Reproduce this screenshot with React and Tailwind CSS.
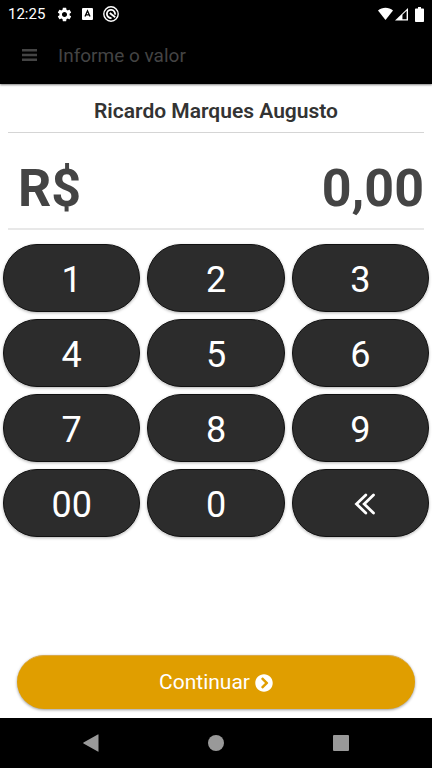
import React, { useState } from 'react';
import { FaChevronCircleRight } from 'react-icons/fa';
import { MdSettings } from 'react-icons/md';

const KEYS = ['1', '2', '3', '4', '5', '6', '7', '8', '9', '00', '0'];

function StatusBar() {
  return (
    <div className="flex h-7 items-center justify-between bg-black px-2 text-white">
      <div className="flex items-center">
        <span className="w-12 text-[15px] leading-7">12:25</span>
        <MdSettings size={17} />
        <svg className="ml-[9px]" width="11" height="12" viewBox="0 0 11 12">
          <rect width="11" height="12" rx="1" fill="#fff" />
          <path d="M3 8.6 5.5 2.8 8 8.6M3.9 6.8h3.2" fill="none" stroke="#000" strokeWidth="1.3" />
        </svg>
        <svg className="ml-[10px]" width="16" height="16" viewBox="0 0 16 16" fill="none" stroke="#fff">
          <circle cx="8" cy="8" r="7.2" strokeWidth="1.4" />
          <path d="M8.500 12A4.100 4.100 0 1 1 12 8.700" strokeWidth="1.8" />
          <path d="m6.800 7 5.400 4.300" strokeWidth="1.8" />
        </svg>
      </div>
      <div className="flex items-center">
        <svg width="15" height="14" viewBox="0 0 16 14">
          <path d="M0 3.2C4.5-.6 11.5-.6 16 3.2L8 13.5z" fill="#fff" />
        </svg>
        <svg className="ml-[2px]" width="13" height="14" viewBox="0 0 14 14">
          <path d="M0 14 14 .5V14z" fill="#fff" />
          <path d="M8 7.8 12.5 3.500V12.700H8z" fill="#000" />
        </svg>
        <svg className="ml-[7px]" width="9" height="15" viewBox="0 0 9 15">
          <path d="M3 0h3v1.500h2.200q.8 0 .8.800v11.900q0 .8-.8.800H.8q-.8 0-.8-.800V2.300q0-.8.800-.8H3z" fill="#fff" />
        </svg>
      </div>
    </div>
  );
}

function NavBar() {
  return (
    <nav className="flex h-[50px] items-center justify-around bg-black px-[28px] text-[#999]">
      <button aria-label="Voltar">
        <svg width="16" height="18" viewBox="0 0 16 18" fill="currentColor">
          <path d="M15.500.8v16.400q0 .8-.7.400L.5 9.500Q-.1 9 .5 8.500L14.800.4q.7-.4.700.4z" />
        </svg>
      </button>
      <button aria-label="Início" className="size-4 rounded-full bg-[#999]" />
      <button aria-label="Recentes" className="size-4 rounded-[1px] bg-[#999]" />
    </nav>
  );
}

export default function App() {
  const [cents, setCents] = useState('');

  const value = (Number(cents) / 100).toFixed(2).replace('.', ',');

  return (
    <div className="flex min-h-screen flex-col bg-white font-[Roboto,sans-serif]">
      <StatusBar />
      <header className="flex h-14 items-center bg-black pl-[22px] text-[#444] shadow-[0_1px_2px_rgba(0,0,0,0.5)]">
        <button aria-label="Menu" className="mr-[21px]">
          <svg width="15" height="14" viewBox="0 0 15 14" fill="currentColor">
            <path d="M0 0h15v2.500H0zM0 4.700h15v2.500H0zM0 9.500h15V12H0z" />
          </svg>
        </button>
        <h1 className="text-[19px]">Informe o valor</h1>
      </header>

      <main className="flex flex-1 flex-col">
        <div className="px-2">
          <p className="h-[49px] border-b border-[#d5d5d5] text-center text-[21px] font-semibold leading-[54px] text-[#333]">
            Ricardo Marques Augusto
          </p>
          <div className="flex h-[97px] items-center justify-between border-b-2 border-[#e8e8e8] pl-[10px] pt-4 text-[52px] font-bold leading-none text-[#444]">
            <span>R$</span>
            <span>{value}</span>
          </div>
        </div>

        <div className="mt-[14px] grid grid-cols-3 gap-[7px] px-[3px]">
          {KEYS.map(key => (
            <button
              key={key}
              onClick={() => setCents(cents + key)}
              className="h-[68px] rounded-full border border-[#111] bg-[#2c2c2c] pt-1 text-[36px] leading-none text-white shadow-[0_1px_3px_rgba(0,0,0,0.3)]"
            >
              {key}
            </button>
          ))}
          <button
            aria-label="Apagar"
            onClick={() => setCents(cents.slice(0, -1))}
            className="flex h-[68px] items-center justify-center rounded-full border border-[#111] bg-[#2c2c2c] pl-[10px] pt-[2px] text-white shadow-[0_1px_3px_rgba(0,0,0,0.3)]"
          >
            <svg width="22" height="22" viewBox="0 0 22 22" fill="none" stroke="currentColor" strokeWidth="2.800" strokeLinecap="round">
              <path d="M11.800 2 2.500 11l9.300 9M19.500 2l-9.300 9 9.300 9" />
            </svg>
          </button>
        </div>

        <button className="mx-[17px] mb-[9px] mt-auto flex h-[54px] items-center justify-center gap-[5px] rounded-full border-t border-[#d9a94a] bg-[#e09e00] text-[21px] text-white shadow-[0_1px_3px_rgba(0,0,0,0.4)]">
          Continuar
          <FaChevronCircleRight size={18} />
        </button>
      </main>

      <NavBar />
    </div>
  );
}
